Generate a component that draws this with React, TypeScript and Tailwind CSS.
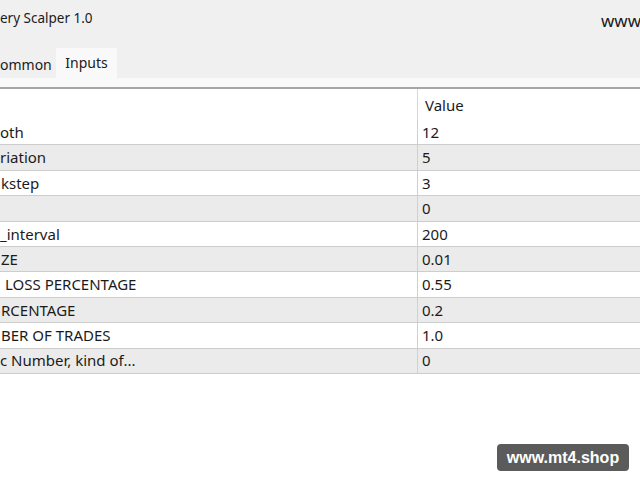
import React from 'react';

const rows: { name: string; value: string; indent: number }[] = [
  { name: 'oth', value: '12', indent: 0 },
  { name: 'riation', value: '5', indent: 0 },
  { name: 'kstep', value: '3', indent: 1 },
  { name: '', value: '0', indent: 0 },
  { name: '_interval', value: '200', indent: 0 },
  { name: 'ZE', value: '0.01', indent: 1 },
  { name: 'LOSS PERCENTAGE', value: '0.55', indent: 5 },
  { name: 'RCENTAGE', value: '0.2', indent: 1 },
  { name: 'BER OF TRADES', value: '1.0', indent: 1 },
  { name: 'c Number, kind of...', value: '0', indent: 0 },
];

export default function App() {
  return (
    <div
      className="relative w-[640px] h-[480px] overflow-hidden bg-white text-[#1b1b1b]"
      style={{ fontFamily: '"Noto Sans", "Open Sans", sans-serif' }}
    >
      {/* Window title */}
      <div className="flex h-[48px] bg-[#f0f0f0] overflow-hidden">
        <div className="w-[601px] shrink-0 pt-[8px] text-[13.5px] leading-[20px]">ery Scalper 1.0</div>
        <div className="shrink-0 pt-[10px] text-[17px] leading-[22px] whitespace-nowrap">www.mt4.shop</div>
      </div>

      {/* Tabs */}
      <div className="flex h-[30px] items-stretch bg-[#f0f0f0]">
        <div className="flex w-[56px] items-center pt-[2px] text-[14px]">ommon</div>
        <div className="flex w-[61px] items-center justify-center bg-[#f9f9f9] pb-[2px] text-[14px]">Inputs</div>
      </div>
      <div className="h-[11px] bg-[#f9f9f9] border-b-2 border-[#a6a6a6]" />

      {/* Table */}
      <div className="text-[15px]">
        <div className="flex h-[31px]">
          <div className="w-[417px] shrink-0" />
          <div className="flex flex-1 items-center border-l border-[#d7d7d7] pl-[7px] pt-[1px]">Value</div>
        </div>
        {rows.map((r, i) => (
          <div
            key={i}
            className={`flex h-[25.4px] border-b border-[#cdcdcd] ${i % 2 === 1 ? 'bg-[#ebebeb]' : 'bg-white'}`}
          >
            <div className="flex w-[417px] shrink-0 items-center whitespace-nowrap" style={{ paddingLeft: r.indent }}>
              {r.name}
            </div>
            <div className="flex flex-1 items-center border-l border-[#d0d0d0] pl-[4px]">{r.value}</div>
          </div>
        ))}
      </div>

      {/* Watermark */}
      <div
        className="absolute left-[497px] top-[444px] flex h-[27px] w-[132px] items-center justify-center rounded-[4px] bg-[#5b5b5b] text-[16px] font-bold text-white"
        style={{ fontFamily: '"Liberation Sans", Arial, sans-serif' }}
      >
        www.mt4.shop
      </div>
    </div>
  );
}
